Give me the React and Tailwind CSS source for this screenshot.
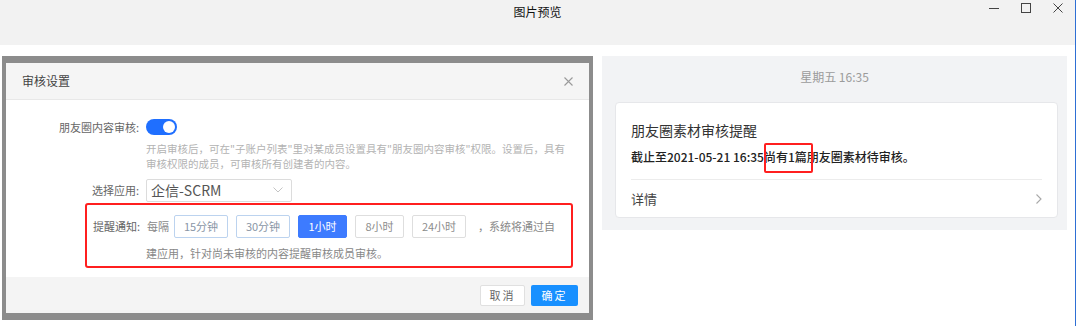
import React from 'react';

const Toggle = () => (
  <div className="w-[31px] h-[16px] rounded-full bg-[#1f6fff] flex items-center justify-end pr-[2px]">
    <div className="w-[12px] h-[12px] rounded-full bg-white" />
  </div>
);

const IntervalButton = ({ label, width, active, tinted }) => {
  const base = 'h-[23px] flex items-center justify-center rounded-[2px] text-[11px] border';
  if (active) {
    return <div className={`${base} ${width} bg-[#3d7bff] border-[#3d7bff] text-white`}>{label}</div>;
  }
  if (tinted) {
    return <div className={`${base} ${width} bg-white border-[#bcd3ef] text-[#8a96a6]`}>{label}</div>;
  }
  return <div className={`${base} ${width} bg-white border-[#dedede] text-[#8c8c8c]`}>{label}</div>;
};

const AuditDialog = () => (
  <div className="w-[591px] h-[264px] border-[#8c8c8c] border-t-[7px] border-b-[7px] border-l-4 border-r-4 bg-white flex flex-col">
    {/* header */}
    <div className="h-[37px] bg-[#f5f5f5] border-b border-[#e8e8e8] flex items-center justify-between pl-[16px] pr-[16px]">
      <span className="text-[12px] text-[#444]">审核设置</span>
      <svg width="9" height="9" viewBox="0 0 9 9" className="text-[#9a9a9a]">
        <path d="M0.5 0.5 L8.5 8.5 M8.5 0.5 L0.5 8.5" stroke="currentColor" strokeWidth="1.1" fill="none" />
      </svg>
    </div>

    {/* body */}
    <div className="flex-1 pt-[19px]">
      <div className="flex items-center">
        <div className="w-[134px] text-right text-[11px] text-[#666] pr-[1px]">朋友圈内容审核:</div>
        <div className="ml-[6px]">
          <Toggle />
        </div>
      </div>
      <div className="pl-[140px] mt-[5px] text-[10.5px] leading-[15px] text-[#b3b3b3]">
        <div>开启审核后，可在"子账户列表"里对某成员设置具有"朋友圈内容审核"权限。设置后，具有</div>
        <div>审核权限的成员，可审核所有创建者的内容。</div>
      </div>
      <div className="flex items-center mt-[8px]">
        <div className="w-[134px] text-right text-[11px] text-[#666] pr-[1px]">选择应用:</div>
        <div className="ml-[6px] w-[146px] h-[23px] border border-[#dcdcdc] rounded-[2px] flex items-center justify-between pl-[4px] pr-[8px]">
          <span className="text-[14px] text-[#555] leading-none">企信-SCRM</span>
          <svg width="10" height="6" viewBox="0 0 10 6">
            <path d="M0.5 0.5 L5 5 L9.5 0.5" stroke="#c4c4c4" strokeWidth="1" fill="none" />
          </svg>
        </div>
      </div>

      <div className="ml-[79px] mt-[1px] w-[488px] h-[65px] border-2 border-[#ff1f1f] rounded-[3px] pt-[10px]">
        <div className="flex items-center">
          <div className="w-[53px] text-right text-[11px] text-[#666]">提醒通知:</div>
          <span className="ml-[7px] text-[11px] text-[#888]">每隔</span>
          <div className="ml-[5px] flex items-center gap-[8px]">
            <IntervalButton label="15分钟" width="w-[54px]" tinted />
            <IntervalButton label="30分钟" width="w-[54px]" tinted />
            <IntervalButton label="1小时" width="w-[49px]" active />
            <IntervalButton label="8小时" width="w-[49px]" />
            <IntervalButton label="24小时" width="w-[54px]" />
          </div>
          <span className="ml-[12px] text-[11px] text-[#888]">，系统将通过自</span>
        </div>
        <div className="mt-[8px] pl-[59px] text-[11px] leading-[15px] text-[#888]">
          建应用，针对尚未审核的内容提醒审核成员审核。
        </div>
      </div>
    </div>

    {/* footer */}
    <div className="h-[36px] bg-[#f4f4f4] flex items-center justify-end gap-[6px] pr-[11px]">
      <div className="w-[45px] h-[21px] bg-white border border-[#e0e0e0] rounded-[2px] flex items-center justify-center text-[11px] text-[#666] tracking-[2px]">
        取消
      </div>
      <div className="w-[47px] h-[21px] bg-[#1890ff] rounded-[2px] flex items-center justify-center text-[11px] text-white tracking-[2px]">
        确定
      </div>
    </div>
  </div>
);

const ReminderPreview = () => (
  <div className="w-[465px] h-[174px] bg-[#f2f3f5] pt-[13px] pl-[13px]">
    <div className="text-center text-[12px] leading-[16px] text-[#9b9b9b] pr-[13px]">星期五 16:35</div>
    <div className="mt-[17px] w-[443px] h-[116px] bg-white border border-[#e6e7ea] rounded-[4px] flex flex-col">
      <div className="pl-[15px] pt-[17px] text-[14px] leading-[20px] text-[#333]">朋友圈素材审核提醒</div>
      <div className="pl-[15px] mt-[8px] text-[12px] leading-[18px] font-medium text-[#222]">
        截止至2021-05-21 16:35
        <span className="relative">
          尚有1篇
          <span className="absolute left-0 -right-[6px] -top-[5px] -bottom-[8px] border-2 border-[#ff1f1f] rounded-[2px]" />
        </span>
        朋友圈素材待审核。
      </div>
      <div className="mx-[15px] mt-[13px] h-px bg-[#ececec]" />
      <div className="flex-1 flex items-center justify-between pl-[15px] pr-[15px]">
        <span className="text-[13px] text-[#444]">详情</span>
        <svg width="6" height="10" viewBox="0 0 6 10">
          <path d="M0.5 0.5 L5 5 L0.5 9.5" stroke="#a8a8a8" strokeWidth="1.1" fill="none" />
        </svg>
      </div>
    </div>
  </div>
);

export default function App() {
  return (
    <div className="w-[1076px] h-[326px] border-r border-[#2e6fd4] bg-white flex flex-col font-['Noto_Sans_CJK_SC','Noto_Sans',sans-serif]">
      {/* window title bar */}
      <div className="h-[45px] bg-[#f2f2f2] relative flex justify-center pt-[3px]">
        <span className="text-[12px] text-[#111] leading-[18px]">图片预览</span>
        <div className="absolute right-[12px] top-[3px] flex items-center gap-[22px]">
          <svg width="10" height="10" viewBox="0 0 10 10">
            <path d="M0 5.5 H10" stroke="#444" strokeWidth="1" />
          </svg>
          <svg width="10" height="10" viewBox="0 0 10 10">
            <rect x="0.5" y="0.5" width="9" height="9" stroke="#444" strokeWidth="1" fill="none" />
          </svg>
          <svg width="10" height="10" viewBox="0 0 10 10">
            <path d="M0.5 0.5 L9.5 9.5 M9.5 0.5 L0.5 9.5" stroke="#444" strokeWidth="1" fill="none" />
          </svg>
        </div>
      </div>

      <div className="flex items-start gap-[9px] pt-[11px] pl-[2px]">
        <AuditDialog />
        <ReminderPreview />
      </div>
    </div>
  );
}
